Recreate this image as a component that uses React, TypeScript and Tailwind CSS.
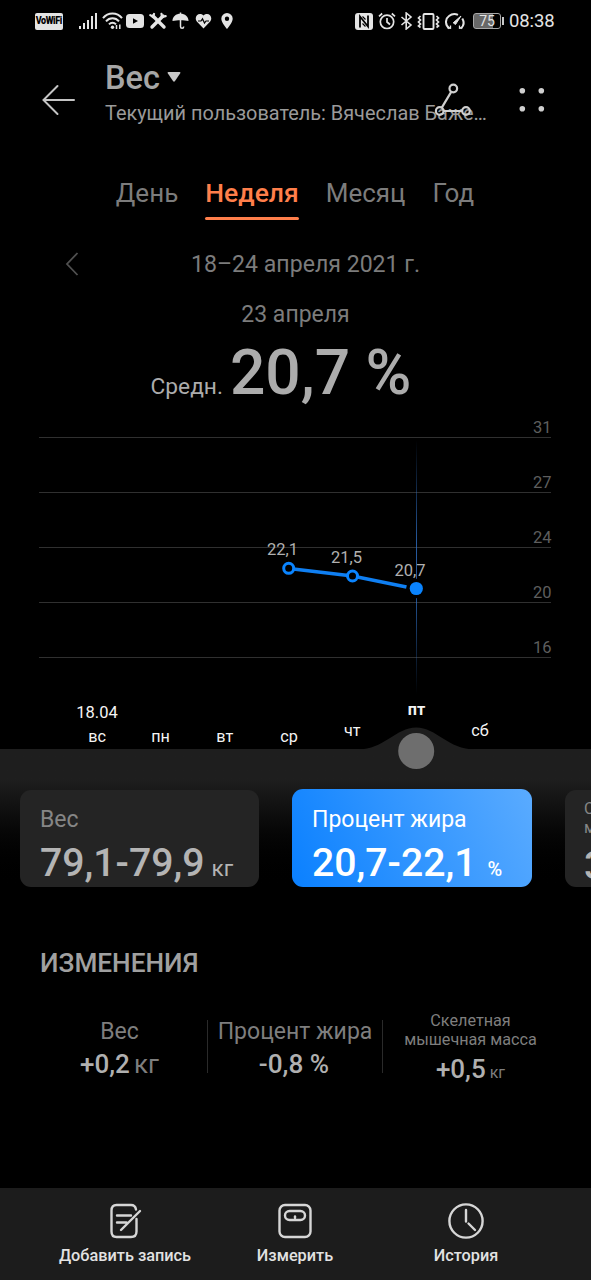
import React, { useState } from 'react';
import clsx from 'clsx';

const tabs = ['День', 'Неделя', 'Месяц', 'Год'];

const grid = [
  { y: 437.5, label: '31' },
  { y: 492.5, label: '27' },
  { y: 547.5, label: '24' },
  { y: 602.5, label: '20' },
  { y: 657.5, label: '16' },
];

const days = [
  { x: 97, y: 742, label: 'вс' },
  { x: 160.6, y: 742, label: 'пн' },
  { x: 224.7, y: 742, label: 'вт' },
  { x: 289, y: 742, label: 'ср' },
  { x: 352.3, y: 736, label: 'чт' },
  { x: 480, y: 736, label: 'сб' },
];

const StatusBar = () => (
  <div className="flex h-[42px] items-center pl-[35px] text-[#e4e4e4]">
    <div className="flex h-[17px] w-[28px] items-center justify-center rounded-[2px] bg-[#e4e4e4] text-black">
      <span className="scale-x-[0.78] text-[11.5px] font-black leading-none tracking-[-0.5px]">VoWiFi</span>
    </div>
    <svg className="ml-[16px]" width="18" height="18" viewBox="0 0 18 18" fill="currentColor">
      <rect x="0" y="14" width="2" height="3" />
      <rect x="4" y="11" width="2" height="6" />
      <rect x="8" y="8" width="2" height="9" />
      <rect x="12" y="4" width="2" height="13" />
      <rect x="16" y="1" width="2" height="16" />
    </svg>
    <svg className="ml-[5px]" width="21" height="18" viewBox="0 0 21 18" fill="none" stroke="currentColor" strokeWidth="2">
      <path d="M1 6.2C6-.1 15-.1 20 6.2" />
      <path d="M4 9.3c3.5-4 9.5-4 13 0" />
      <path d="M7 12.4c2-2.2 5-2.2 7 0" />
      <circle cx="10.5" cy="15.3" r="1.7" fill="currentColor" stroke="none" />
      <path d="M14.5 17v-4M17.8 12.5v4.5" strokeWidth="1.5" />
    </svg>
    <svg className="ml-[3px]" width="18" height="14" viewBox="0 0 18 14">
      <rect width="18" height="14" rx="3.5" fill="currentColor" />
      <path d="M7 4.2v5.6L12 7z" fill="#000" />
    </svg>
    <svg className="ml-[5px]" width="18" height="18" viewBox="0 0 18 18" fill="none" stroke="currentColor" strokeLinecap="round">
      <path d="M4 4l11 11" strokeWidth="3.4" />
      <path d="M14 4L3 15" strokeWidth="3.4" />
      <path d="M1.3 3.2L4 5l1-3M12.5 1.8L13 5l3.7-.8" strokeWidth="2.2" />
    </svg>
    <svg className="ml-[5px]" width="17" height="18" viewBox="0 0 17 18">
      <path d="M.5 9C.5 4.5 4 1.8 8.5 1.8S16.5 4.5 16.5 9c-2-.7-5-.8-8-.8S2.5 8.3.5 9z" fill="currentColor" />
      <path d="M8.5.5v14c0 2.4 3.2 2.4 3.2 0" fill="none" stroke="currentColor" strokeWidth="1.5" />
    </svg>
    <svg className="ml-[6px]" width="17" height="16" viewBox="0 0 17 16">
      <path d="M8.5 15.5L1.8 8.6C-1.6 4 3.8-1.8 8.5 2.6 13.2-1.8 18.6 4 15.2 8.6z" fill="currentColor" />
      <path d="M3 8h3l1.5-2.2L9.5 10l1.5-2h3" fill="none" stroke="#000" strokeWidth="1.2" />
    </svg>
    <svg className="ml-[9px]" width="12" height="16" viewBox="0 0 12 16" fill="currentColor" fillRule="evenodd">
      <path d="M6 0a5.7 5.7 0 0 0-5.7 5.7C.3 9.6 6 16 6 16s5.7-6.4 5.7-10.3A5.7 5.7 0 0 0 6 0zm0 3.5a2.2 2.2 0 1 1 0 4.4 2.2 2.2 0 0 1 0-4.4z" />
    </svg>

    <svg className="ml-[122px]" width="18" height="17" viewBox="0 0 18 17">
      <rect width="18" height="17" rx="3" fill="currentColor" />
      <path d="M5 14.5V3.5L13 13.5V2.5" fill="none" stroke="#000" strokeWidth="1.8" />
      <path d="M7.5 3.5l3 3M7.5 10.5l3 3" stroke="#000" strokeWidth="1.2" />
    </svg>
    <svg className="ml-[5px]" width="18" height="18" viewBox="0 0 18 18" fill="none" stroke="currentColor" strokeWidth="1.7">
      <circle cx="9" cy="9.8" r="6.7" />
      <path d="M9 6v4l3 2.5M1 4.3L4.2 1.5M17 4.3L13.8 1.5" />
    </svg>
    <svg className="ml-[4px]" width="13" height="18" viewBox="0 0 13 18" fill="none" stroke="currentColor" strokeWidth="1.6">
      <path d="M1.5 5l9.5 8-4.8 4V1l4.8 4-9.5 8" />
    </svg>
    <svg className="ml-[4px]" width="23" height="17" viewBox="0 0 23 17" fill="none" stroke="currentColor" strokeWidth="1.9">
      <rect x="6.5" y="1" width="10" height="15" rx="1" />
      <path d="M3.5 3L1.5 5l2 2-2 2 2 2-2 2 2 1.5M19.5 3l2 2-2 2 2 2-2 2 2 2-2 1.5" strokeWidth="1.7" />
    </svg>
    <svg className="ml-[5px]" width="20" height="18" viewBox="0 0 20 18" fill="none" stroke="currentColor" strokeWidth="2">
      <path d="M4.5 16.5C0 13.5-.2 7 4 4c2.8-2.3 6-2.6 9-1.2M17.3 6.5c2.2 4 1.2 7.8-1.8 10" />
      <path d="M2.5 15.8l3 .4v-2.8M17.5 15.8l-3 .4v-2.8" strokeWidth="1.3" />
      <path d="M8.2 10.8L16 4l-5.5 8.5z" fill="currentColor" strokeWidth="1" />
    </svg>
    <div className="ml-[8px] flex h-[16px] w-[28px] items-center justify-center rounded-[3px] border border-[#a8a8a8] bg-gradient-to-r from-[#686868] from-75% to-black to-75% text-[14px] leading-none">
      75
    </div>
    <div className="ml-[1px] h-[8px] w-[2px] bg-[#c8c8c8]" />
    <span className="ml-[5px] text-[18.5px] leading-5 tracking-[-0.1px]">08:38</span>
  </div>
);

const Header = () => (
  <header className="relative flex h-[119px] items-start pl-[42px] pt-4">
    <svg className="mt-[26px]" width="34" height="32" viewBox="0 0 34 32" fill="none" stroke="#c4c4c4" strokeWidth="2" strokeLinecap="round">
      <path d="M1.5 16H32M15.5 2L1.5 16l14 14" />
    </svg>
    <div className="ml-[29px]">
      <div className="flex items-center">
        <h1 className="text-[32.5px] font-medium leading-[41px] text-[#a6a6a6]">Вес</h1>
        <svg className="mb-[3px] ml-[7px]" width="14" height="10" viewBox="0 0 14 10" fill="#c8c8c8">
          <path d="M1.5 0h11q1.5 0 .6 1.4L8 9q-1 1.3-2 0L.9 1.4Q0 0 1.5 0z" />
        </svg>
      </div>
      <p className="mt-px whitespace-nowrap text-[19.9px] leading-7 text-[#9a9a9a]">
        Текущий пользователь: Вячеслав Баже…
      </p>
    </div>
    <svg className="absolute left-[433px] top-[40px]" width="40" height="36" viewBox="0 0 40 36" fill="none" stroke="#cfcfcf" strokeWidth="2.2">
      <circle cx="20.3" cy="6.5" r="3.8" />
      <circle cx="6.7" cy="29" r="3.8" />
      <circle cx="33" cy="29" r="3.8" />
      <path d="M18.2 9.9L8.8 25.6M10.6 29h18.5" />
    </svg>
    <svg className="absolute left-[518px] top-[45px]" width="28" height="26" viewBox="0 0 28 26" fill="#cfcfcf">
      <circle cx="4.3" cy="3.8" r="2.8" />
      <circle cx="23.3" cy="3.8" r="2.8" />
      <circle cx="4.3" cy="21.8" r="2.8" />
      <circle cx="23.3" cy="21.8" r="2.8" />
    </svg>
  </header>
);

const Chart = () => (
  <svg className="relative z-10 block overflow-visible" width="591" height="339" viewBox="0 410 591 339">
    <defs>
      <linearGradient id="cursor" gradientUnits="userSpaceOnUse" x1="0" y1="440" x2="0" y2="694">
        <stop offset="0" stopColor="#2f6fc4" stopOpacity="0" />
        <stop offset="0.4" stopColor="#2f6fc4" stopOpacity="0.8" />
        <stop offset="0.6" stopColor="#2f6fc4" stopOpacity="0.8" />
        <stop offset="1" stopColor="#2f6fc4" stopOpacity="0" />
      </linearGradient>
    </defs>
    {grid.map((g) => (
      <g key={g.label}>
        <path d={`M39 ${g.y}H551`} stroke="#303030" />
        <text x="551.5" y={g.y - 4.5} textAnchor="end" fontSize="16.5" fill="#5e5e5e">
          {g.label}
        </text>
      </g>
    ))}
    <rect x="416" y="440" width="1" height="254" fill="url(#cursor)" />
    <path d="M289 568.5L352.5 576L406.5 587" fill="none" stroke="#0f7ff2" strokeWidth="3.4" />
    <circle cx="288.7" cy="568.3" r="5" fill="#000" stroke="#0a84ff" strokeWidth="3" />
    <circle cx="352.5" cy="576" r="5" fill="#000" stroke="#0a84ff" strokeWidth="3" />
    <circle cx="416.3" cy="588.5" r="9.7" fill="#000" />
    <circle cx="416.3" cy="588.5" r="6.6" fill="#0a84ff" />
    <g fontSize="16.5" fill="#b0b0b0" textAnchor="middle">
      <text x="282.5" y="555">22,1</text>
      <text x="346.5" y="563.3">21,5</text>
      <text x="410" y="576">20,7</text>
    </g>

    {/* day scale with the drag handle */}
    <path d="M358 749.5C384 749.5 396 727.5 416.2 727.5S448 749.5 475 749.5z" fill="#1e1e1e" />
    <circle cx="416.2" cy="751" r="18" fill="#6e6e6e" />
    <g fontSize="16.2" fill="#f4f4f4" textAnchor="middle">
      <text x="97" y="718.3" fontSize="16.5">
        18.04
      </text>
      {days.map((d) => (
        <text key={d.label} x={d.x} y={d.y}>
          {d.label}
        </text>
      ))}
      <text x="416.5" y="715" fontWeight="700">
        пт
      </text>
    </g>
  </svg>
);

const MetricCards = () => (
  <div className="flex h-[151px] gap-[33px] overflow-hidden bg-gradient-to-b from-[#1e1e1e] from-20% to-black to-95% pl-5 pt-10">
    <div className="mt-px h-[97px] w-[239px] shrink-0 rounded-[11px] bg-[#242424] px-5 pt-[14px]">
      <div className="text-[23px] leading-8 text-[#868686]">Вес</div>
      <div className="flex items-baseline whitespace-nowrap leading-[54px] text-[#b4b4b4]">
        <span className="text-[39.2px] font-medium">79,1-79,9</span>
        <span className="ml-[7px] text-[22.5px]">кг</span>
      </div>
    </div>
    <div className="h-[98px] w-[240px] shrink-0 rounded-[11px] bg-[linear-gradient(65deg,#0a80ff,#5aabff)] px-5 pt-[15px] text-white">
      <div className="text-[23px] leading-8">Процент жира</div>
      <div className="flex items-baseline whitespace-nowrap leading-[54px]">
        <span className="text-[39.2px] font-medium">20,7-22,1</span>
        <span className="ml-[11px] text-[20px] font-medium">%</span>
      </div>
    </div>
    <div className="mt-px h-[97px] w-[240px] shrink-0 rounded-[11px] bg-[#242424] px-[19px] pt-[9px]">
      <div className="text-[16px] leading-[19px] text-[#868686]">
        Скелетная
        <br />
        мышечная масса
      </div>
      <div className="mt-1 text-[39.2px] font-medium leading-[50px] text-[#b4b4b4]">3</div>
    </div>
  </div>
);

const Changes = () => (
  <section className="h-[288px] pt-[47px]">
    <h2 className="pl-10 text-[26.2px] font-medium leading-8 text-[#a0a0a0]">ИЗМЕНЕНИЯ</h2>
    <div className="mt-[41px] flex whitespace-nowrap pl-8 text-center text-[#7e7e7e]">
      <div className="-mt-1 w-[175px]">
        <div className="text-[23px] leading-8">Вес</div>
        <div className="flex items-baseline justify-center leading-8">
          <span className="text-[26px] font-medium text-[#b0b0b0]">+0,2</span>
          <span className="ml-1 text-[26px]">кг</span>
        </div>
      </div>
      <div className="h-[53px] w-px bg-[#2a2a2a]" />
      <div className="-mt-1 w-[174px] pr-[2px]">
        <div className="-mr-[2px] text-[23px] leading-8">Процент жира</div>
        <div className="text-[26.2px] font-medium leading-8 text-[#b0b0b0]">-0,8 %</div>
      </div>
      <div className="h-[53px] w-px bg-[#2a2a2a]" />
      <div className="-mt-[9px] w-[175px]">
        <div className="text-[16.2px] leading-[19px]">
          Скелетная
          <br />
          мышечная масса
        </div>
        <div className="flex items-baseline justify-center leading-10">
          <span className="text-[26px] font-medium text-[#b0b0b0]">+0,5</span>
          <span className="ml-1 text-[16px]">кг</span>
        </div>
      </div>
    </div>
  </section>
);

const BottomBar = () => (
  <nav className="flex h-[92px] bg-[#1c1c1c] pl-10 pt-[14px] text-[16.3px] font-medium leading-5 text-[#e2e2e2]">
    <button className="flex w-[170px] flex-col items-center gap-[6px] whitespace-nowrap">
      <svg width="38" height="38" viewBox="0 0 38 38" fill="none" stroke="#d6d6d6" strokeWidth="2.4" strokeLinecap="round">
        <path d="M30 7.5C29.5 4.5 28 3 25 3H10.5Q5.500 3 5.500 8.500v21Q5.500 35 10.500 35H25q5.500 0 5.500-5.500V17" />
        <path d="M11 13.500h14M11 20.500h9.500M15 28L34 9" />
      </svg>
      Добавить запись
    </button>
    <button className="flex w-[170px] flex-col items-center gap-[6px]">
      <svg width="38" height="38" viewBox="0 0 38 38" fill="none" stroke="#d6d6d6" strokeWidth="2.4" strokeLinecap="round">
        <rect x="3.5" y="3" width="31" height="32" rx="5.5" />
        <rect x="9" y="9" width="20" height="9" rx="4.5" />
        <path d="M19 14.5v1.5" />
      </svg>
      Измерить
    </button>
    <button className="flex w-[172px] flex-col items-center gap-[6px]">
      <svg width="38" height="38" viewBox="0 0 38 38" fill="none" stroke="#d6d6d6" strokeWidth="2.4" strokeLinecap="round">
        <circle cx="19" cy="19" r="16.6" />
        <path d="M19 8v11.5M21.5 21.5l6.5 6.5" />
      </svg>
      История
    </button>
  </nav>
);

export default function App() {
  const [active, setActive] = useState('Неделя');

  return (
    <div className="h-[1280px] w-[591px] overflow-hidden bg-black font-['Roboto',sans-serif]">
      <StatusBar />
      <Header />
      <div className="flex h-[72px] justify-center gap-[27px] pr-px pt-4 leading-8">
        {tabs.map((t) => (
          <button
            key={t}
            onClick={() => setActive(t)}
            className={clsx(
              'flex h-[43px] flex-col justify-between',
              t === active ? 'text-[26.5px] font-medium text-[#ff7f4b]' : 'text-[26px] text-[#7c7c7c]'
            )}
          >
            {t}
            {t === active && <span className="h-[3px] w-full rounded-full bg-[#ff7f4b]" />}
          </button>
        ))}
      </div>
      <div className="flex h-[49px] items-start pl-[65px] pt-4 text-[23.1px] leading-8 text-[#7c7c7c]">
        <svg className="mt-[3px]" width="14" height="24" viewBox="0 0 14 24" fill="none" stroke="#505050" strokeWidth="1.8">
          <path d="M12.5 1L2 12l10.5 11" />
        </svg>
        <span className="ml-[112px]">18–24 апреля 2021 г.</span>
      </div>
      <div className="mt-[17px] h-[38px] text-center text-[23px] leading-8 text-[#7c7c7c]">23 апреля</div>
      <div className="flex h-[73px] items-baseline justify-center pr-[29px] leading-[72px] text-[#acacac]">
        <span className="text-[22.7px]">Средн.</span>
        <span className="ml-[7px] text-[62.3px] font-medium">20,7 %</span>
      </div>
      <Chart />
      <MetricCards />
      <Changes />
      <BottomBar />
    </div>
  );
}
